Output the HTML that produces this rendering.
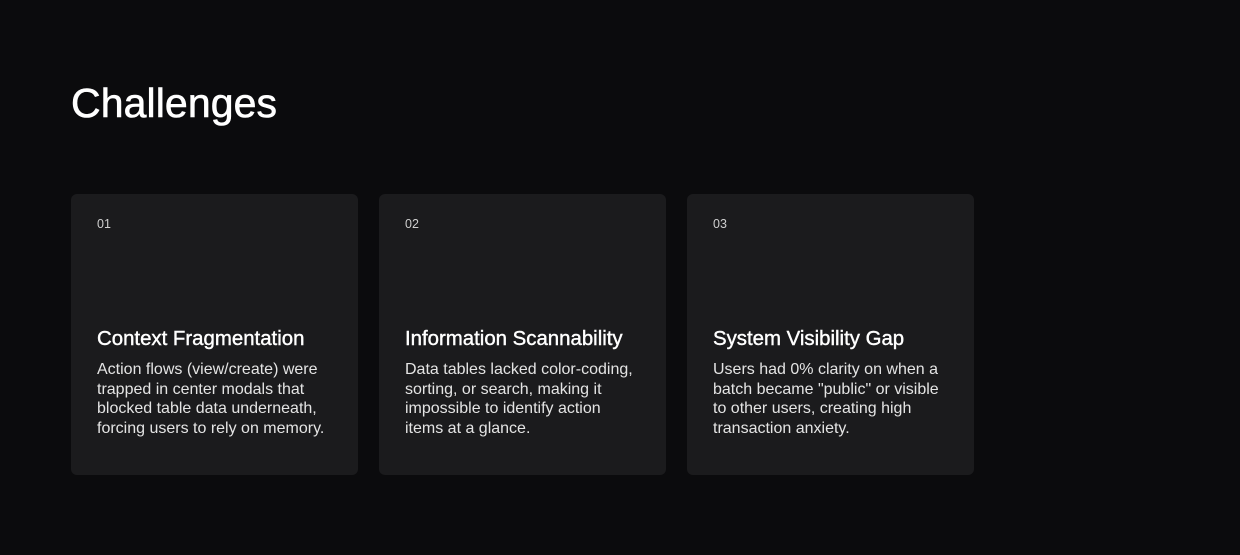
<!DOCTYPE html>
<html><head><meta charset="utf-8"><style>
*{margin:0;padding:0;box-sizing:border-box}
body{width:1240px;height:555px;background:#0b0b0d;font-family:"Liberation Sans",sans-serif;color:#fff;position:relative;overflow:hidden}
h1{position:absolute;left:71px;top:79px;font-size:41px;font-weight:normal;letter-spacing:0.1px;line-height:48px;-webkit-text-stroke:0.6px #fff}
.card{position:absolute;top:194px;width:287px;height:281px;background:#1b1b1d;border-radius:6px}
.n{position:absolute;left:26px;top:23px;font-size:12.5px;color:#cfcfcf}
.t{position:absolute;left:26px;top:133px;font-size:20.4px;letter-spacing:0px;line-height:24px;white-space:nowrap;-webkit-text-stroke:0.4px #fff}
.b{position:absolute;left:26px;top:166px;width:260px;font-size:16px;line-height:19.6px;color:#e4e4e4;letter-spacing:0px}
</style></head><body>
<h1>Challenges</h1>
<div class="card" style="left:71px"><div class="n">01</div><div class="t">Context Fragmentation</div><div class="b">Action flows (view/create) were<br>trapped in center modals that<br>blocked table data underneath,<br>forcing users to rely on memory.</div></div>
<div class="card" style="left:379px"><div class="n">02</div><div class="t">Information Scannability</div><div class="b">Data tables lacked color-coding,<br>sorting, or search, making it<br>impossible to identify action<br>items at a glance.</div></div>
<div class="card" style="left:687px"><div class="n">03</div><div class="t">System Visibility Gap</div><div class="b">Users had 0% clarity on when a<br>batch became "public" or visible<br>to other users, creating high<br>transaction anxiety.</div></div>
</body></html>
